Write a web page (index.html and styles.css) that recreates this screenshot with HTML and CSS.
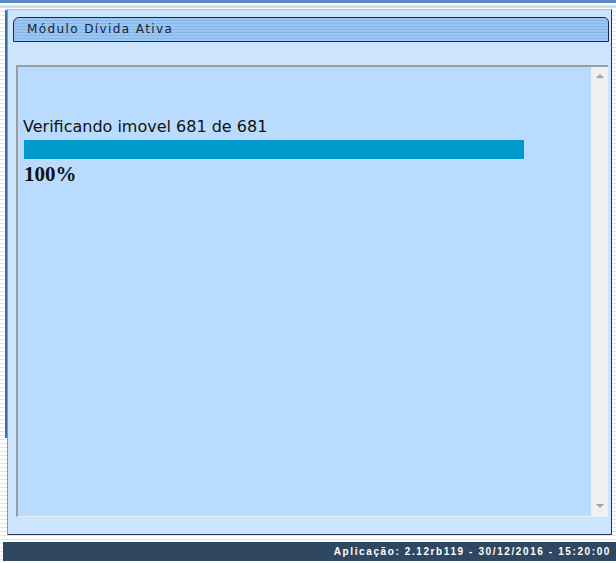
FILE: index.html
```html
<!DOCTYPE html>
<html lang="pt-BR">
<head>
<meta charset="utf-8">
<title>Módulo Dívida Ativa</title>
<link rel="stylesheet" href="styles.css">
</head>
<body>
<div class="topbar"></div>
<div class="main">
  <div class="side"></div>
  <div class="panel">
    <div class="tab">Módulo Dívida Ativa</div>
    <div class="frame">
      <div class="content">
        <div class="status">Verificando imovel 681 de 681</div>
        <div class="bar"></div>
        <div class="percent">100%</div>
      </div>
      <div class="scroll">
        <span class="arrow up"></span>
        <span class="arrow down"></span>
      </div>
    </div>
  </div>
</div>
<div class="footer">Aplicação: 2.12rb119 - 30/12/2016 - 15:20:00</div>
</body>
</html>
```
FILE: styles.css
```css
html, body {
  margin: 0;
  padding: 0;
}
body {
  width: 616px;
  height: 563px;
  overflow: hidden;
  background: repeating-linear-gradient(to bottom, #ffffff 0, #ffffff 3px, #d9e6f2 3px, #d9e6f2 4px);
  font-family: "DejaVu Sans", Verdana, sans-serif;
}
.topbar {
  height: 3px;
  background: #5b89c2;
  border-bottom: 2px solid #ffffff;
  box-shadow: 0 3px 0 #cfe0f0;
}
.main {
  display: flex;
  align-items: flex-start;
  margin-top: 4px;
}
.side {
  width: 5px;
  height: 428px;
  margin-top: 1px;
  border-right: 2px solid #3c6fae;
}
.panel {
  width: 603px;
  height: 517px;
  background: #cce5fd;
  border: 1px solid #22364f;
  border-top-color: #a9c4df;
  border-left-color: #7d98b8;
  padding-top: 7px;
  box-sizing: content-box;
}
.tab {
  margin-left: 5px;
  height: 23px;
  line-height: 23px;
  border: 1px solid #1b2a45;
  border-radius: 6px 5px 0 0;
  background: repeating-linear-gradient(to bottom, #9cc6f2 0, #9cc6f2 2px, #86b6ea 2px, #86b6ea 3px);
  color: #14233d;
  font-size: 12px;
  letter-spacing: 1.4px;
  padding-left: 13px;
  box-sizing: content-box;
  width: 581px;
}
.frame {
  margin-top: 23px;
  margin-left: 8px;
  width: 590px;
  height: 449px;
  display: flex;
  border-top: 2px solid #9c9c9c;
  border-left: 2px solid #9c9c9c;
  border-bottom: 1px solid #e4eef9;
}
.content {
  flex: 1;
  background: #b9dcfe;
  padding-top: 50px;
  padding-left: 5px;
}
.status {
  font-family: "DejaVu Sans", Verdana, sans-serif;
  font-size: 16px;
  line-height: 19px;
  color: #111;
}
.bar {
  margin-top: 4px;
  margin-left: 1px;
  width: 500px;
  height: 19px;
  background: #0099cc;
}
.percent {
  margin-top: 3px;
  margin-left: 1px;
  font-family: "Liberation Serif", "Times New Roman", serif;
  font-weight: bold;
  font-size: 21px;
  line-height: 24px;
  color: #111;
}
.scroll {
  width: 17px;
  background: #f0f0f0;
  display: flex;
  flex-direction: column;
  justify-content: space-between;
  align-items: center;
  padding: 7px 0 8px;
  box-sizing: border-box;
}
.arrow {
  width: 0;
  height: 0;
  border-left: 4px solid transparent;
  border-right: 4px solid transparent;
}
.arrow.up {
  border-bottom: 4px solid #a3a3a3;
}
.arrow.down {
  border-top: 4px solid #a3a3a3;
}
.footer {
  margin-top: 7px;
  margin-left: 3px;
  height: 19px;
  line-height: 18px;
  padding-top: 1px;
  box-sizing: border-box;
  background: #2f4761;
  color: #ffffff;
  font-family: "Liberation Sans", Arial, sans-serif;
  font-weight: bold;
  font-size: 10px;
  letter-spacing: 1.6px;
  text-align: right;
  padding-right: 5px;
}
```
